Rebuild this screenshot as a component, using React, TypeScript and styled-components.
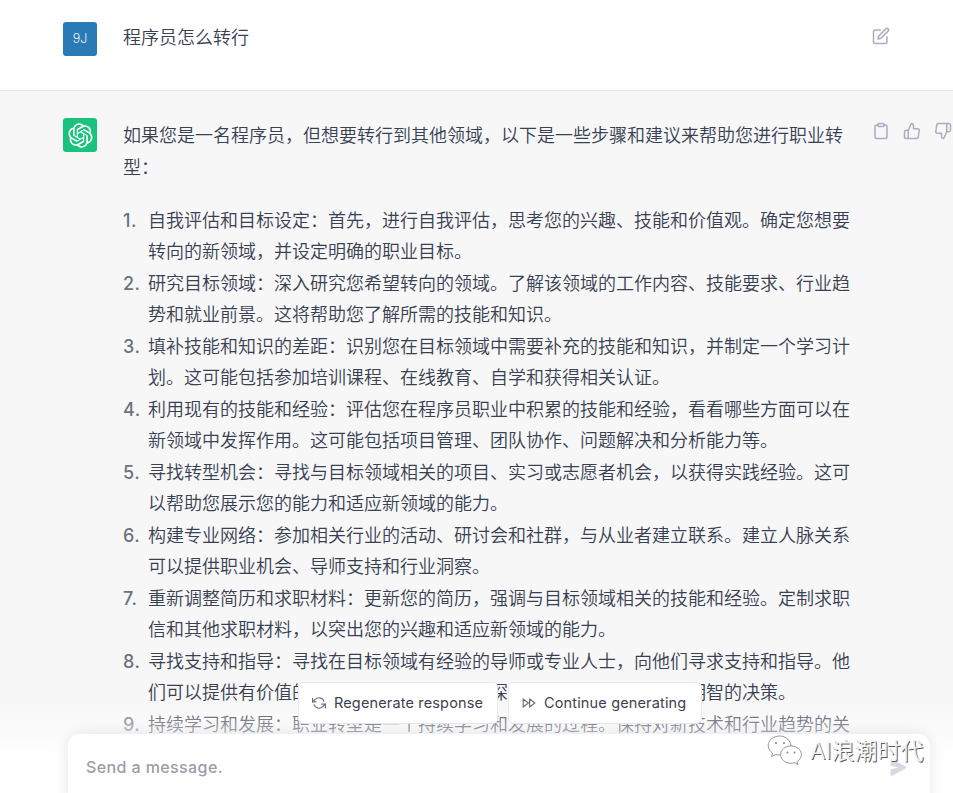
import React from 'react';
import styled, { createGlobalStyle } from 'styled-components';

const GlobalStyle = createGlobalStyle`
  html, body {
    margin: 0;
    height: 100%;
    overflow: hidden;
    background: #f7f7f8;
  }
  * { box-sizing: border-box; }
`;

const Page = styled.div`
  position: relative;
  width: 953px;
  height: 793px;
  overflow: hidden;
  font-family: Inter, "Noto Sans CJK SC", sans-serif;
  font-weight: 350;
  color: #374151;
  font-size: 18px;
  line-height: 31.5px;
`;

const Row = styled.div<{ $bot?: boolean }>`
  display: flex;
  padding: ${(p) => (p.$bot ? '27px 0 0 63px' : '22px 0 0 63px')};
  height: ${(p) => (p.$bot ? 'auto' : '91px')};
  background: ${(p) => (p.$bot ? '#f7f7f8' : '#ffffff')};
  border-bottom: ${(p) => (p.$bot ? 'none' : '1px solid #e5e5e6')};
`;

const Avatar = styled.div<{ $color: string }>`
  flex: none;
  width: 34px;
  height: 34px;
  border-radius: 3px;
  background: ${(p) => p.$color};
  color: #e8f2fa;
  display: flex;
  align-items: center;
  justify-content: center;
  font-size: 12.5px;
  line-height: 1;
`;

const Body = styled.div`
  flex: none;
  width: 728px;
  margin-left: 26px;
`;

const UserText = styled.div`
  margin-top: 0;
`;

const Para = styled.p`
  margin: 0;
  margin-top: 2px;
`;

const Steps = styled.ol`
  margin: 21.5px 0 0;
  padding: 0;
  list-style: none;
`;

const Step = styled.li`
  display: flex;
`;

const StepNum = styled.span`
  flex: none;
  width: 25px;
  font-weight: 500;
  letter-spacing: 0.5px;
  color: #6b7280;
`;

const StepText = styled.span`
  flex: 1;
`;

const Actions = styled.div<{ $top: number }>`
  flex: none;
  display: flex;
  gap: 13px;
  margin-left: 21px;
  color: #acacbe;
  padding-top: ${(p) => p.$top}px;
  height: 24px;
`;

const Fade = styled.div`
  position: absolute;
  left: 0;
  right: 0;
  bottom: 0;
  height: 112px;
  background: linear-gradient(180deg, rgba(255, 255, 255, 0) 18%, #ffffff 68%);
`;

const FloatButton = styled.button<{ $left: number; $width: number }>`
  position: absolute;
  top: 682px;
  left: ${(p) => p.$left}px;
  width: ${(p) => p.$width}px;
  height: 42px;
  padding: 0 0 0 13px;
  display: flex;
  align-items: center;
  gap: 8px;
  background: #ffffff;
  border: 1px solid #e8e8ea;
  border-radius: 5px;
  color: #40414f;
  font-family: Inter, sans-serif;
  font-size: 14.5px;
  letter-spacing: 0.15px;
  line-height: 20px;
`;

const InputBox = styled.div`
  position: absolute;
  left: 68px;
  top: 734px;
  width: 862px;
  height: 80px;
  padding: 21px 18px;
  background: #ffffff;
  border-radius: 12px;
  box-shadow: 0 0 15px rgba(0, 0, 0, 0.1);
  color: #9c9ca8;
  font-size: 16px;
  font-weight: 450;
  letter-spacing: 0.4px;
  line-height: 24px;
`;

const SendIcon = styled.svg`
  position: absolute;
  left: 822px;
  top: 25px;
  width: 17px;
  height: 17px;
  color: #d9d9e3;
`;

const Watermark = styled.div`
  position: absolute;
  left: 767px;
  top: 735px;
  display: flex;
  align-items: center;
  gap: 7px;
  height: 33px;
  color: #f2f2f2;
  font-size: 23px;
  line-height: 33px;
  text-shadow: 1px 1px 0 #5c5c5c;
`;

const stroke = {
  fill: 'none',
  stroke: 'currentColor',
  strokeWidth: 2,
  strokeLinecap: 'round' as const,
  strokeLinejoin: 'round' as const,
};

const OPENAI_PATH =
  'M37.5324 16.8707C37.9808 15.5241 38.1363 14.0974 37.9886 12.6859C37.8409 11.2744 37.3934 9.91076 36.676 8.68622C35.6126 6.83404 33.9882 5.3676 32.0373 4.4985C30.0864 3.62941 27.9098 3.40259 25.8215 3.85078C24.8796 2.7893 23.7219 1.94125 22.4257 1.36341C21.1295 0.785575 19.7249 0.491269 18.3058 0.500197C16.1708 0.495044 14.0893 1.16803 12.3614 2.42214C10.6335 3.67624 9.34853 5.44666 8.6917 7.47815C7.30085 7.76286 5.98686 8.3414 4.8377 9.17505C3.68854 10.0087 2.73073 11.0782 2.02839 12.312C0.956464 14.1591 0.498905 16.2988 0.721698 18.4228C0.944492 20.5467 1.83612 22.5449 3.268 24.1293C2.81966 25.4759 2.66413 26.9026 2.81182 28.3141C2.95951 29.7256 3.40701 31.0892 4.12437 32.3138C5.18791 34.1659 6.8123 35.6322 8.76321 36.5013C10.7141 37.3704 12.8907 37.5973 14.9789 37.1492C15.9208 38.2107 17.0786 39.0587 18.3747 39.6366C19.6709 40.2144 21.0755 40.5087 22.4946 40.4998C24.6307 40.5054 26.7133 39.8321 28.4418 38.5772C30.1704 37.3223 31.4556 35.5506 32.1119 33.5179C33.5027 33.2332 34.8167 32.6547 35.9659 31.821C37.115 30.9874 38.0728 29.9178 38.7752 28.684C39.8458 26.8371 40.3023 24.6979 40.0789 22.5748C39.8556 20.4517 38.9639 18.4544 37.5324 16.8707ZM22.4978 37.8849C20.7443 37.8874 19.0459 37.2733 17.6994 36.1501C17.7601 36.117 17.8666 36.0586 17.936 36.0161L25.9004 31.4156C26.1003 31.3019 26.2663 31.137 26.3813 30.9378C26.4964 30.7386 26.5563 30.5124 26.5549 30.2825V19.0542L29.9213 20.998C29.9389 21.0068 29.9541 21.0198 29.9656 21.0359C29.977 21.052 29.9842 21.0707 29.9867 21.0902V30.3889C29.9842 32.375 29.1946 34.2791 27.7909 35.6841C26.3872 37.0892 24.4838 37.8806 22.4978 37.8849ZM6.39227 31.0064C5.51397 29.4888 5.19742 27.7107 5.49804 25.9832C5.55718 26.0187 5.66048 26.0818 5.73461 26.1244L13.699 30.7248C13.8975 30.8408 14.1233 30.902 14.3532 30.902C14.583 30.902 14.8088 30.8408 15.0073 30.7248L24.731 25.1103V28.9979C24.7321 29.0177 24.7283 29.0376 24.7199 29.0556C24.7115 29.0736 24.6988 29.0893 24.6829 29.1012L16.6317 33.7497C14.9096 34.7416 12.8643 35.0097 10.9447 34.4954C9.02506 33.9811 7.38785 32.7263 6.39227 31.0064ZM4.29707 13.6194C5.17156 12.0998 6.55279 10.9364 8.19885 10.3327C8.19885 10.4013 8.19491 10.5228 8.19491 10.6071V19.808C8.19351 20.0378 8.25334 20.2638 8.36823 20.4629C8.48312 20.6619 8.64893 20.8267 8.84863 20.9404L18.5723 26.5542L15.206 28.4979C15.1894 28.5089 15.1703 28.5155 15.1505 28.5173C15.1307 28.5191 15.1107 28.516 15.0924 28.5082L7.04046 23.8557C5.32135 22.8601 4.06716 21.2235 3.55289 19.3046C3.03862 17.3858 3.30624 15.3413 4.29707 13.6194ZM31.955 20.0556L22.2312 14.4411L25.5976 12.4981C25.6142 12.4872 25.6333 12.4805 25.6531 12.4787C25.6729 12.4769 25.6928 12.4801 25.7111 12.4879L33.7631 17.1364C34.9967 17.849 36.0017 18.8982 36.6606 20.1613C37.3194 21.4244 37.6047 22.849 37.4832 24.2684C37.3617 25.6878 36.8382 27.0432 35.9743 28.1759C35.1103 29.3086 33.9415 30.1717 32.6047 30.6641C32.6047 30.5947 32.6047 30.4733 32.6047 30.3889V21.188C32.6066 20.9586 32.5474 20.7328 32.4332 20.5338C32.319 20.3348 32.154 20.1698 31.955 20.0556ZM35.3055 15.0128C35.2464 14.9765 35.1431 14.9142 35.069 14.8717L27.1045 10.2712C26.906 10.1554 26.6803 10.0943 26.4504 10.0943C26.2206 10.0943 25.9948 10.1554 25.7963 10.2712L16.0726 15.8858V11.9982C16.0715 11.9783 16.0753 11.9585 16.0837 11.9405C16.0921 11.9225 16.1048 11.9068 16.1207 11.8949L24.1719 7.25025C25.4053 6.53903 26.8158 6.19376 28.2383 6.25482C29.6608 6.31589 31.0364 6.78077 32.2044 7.59508C33.3723 8.40939 34.2842 9.53945 34.8334 10.8531C35.3826 12.1667 35.5464 13.6095 35.3055 15.0128ZM14.2424 21.9419L10.8752 19.9981C10.8576 19.9893 10.8423 19.9763 10.8309 19.9602C10.8195 19.9441 10.8122 19.9254 10.8098 19.9058V10.6071C10.8107 9.18295 11.2173 7.78848 11.9819 6.58696C12.7466 5.38544 13.8377 4.42659 15.1275 3.82264C16.4173 3.21869 17.8524 2.99464 19.2649 3.1767C20.6775 3.35876 22.0089 3.93941 23.1034 4.85067C23.0427 4.88379 22.937 4.94215 22.8668 4.98473L14.9024 9.58517C14.7025 9.69878 14.5366 9.86356 14.4215 10.0626C14.3065 10.2616 14.2466 10.4877 14.2479 10.7175L14.2424 21.9419ZM16.071 17.9991L20.4018 15.4978L24.7325 17.9975V22.9985L20.4018 25.4983L16.071 22.9985V17.9991Z';

const steps = [
  '自我评估和目标设定：首先，进行自我评估，思考您的兴趣、技能和价值观。确定您想要转向的新领域，并设定明确的职业目标。',
  '研究目标领域：深入研究您希望转向的领域。了解该领域的工作内容、技能要求、行业趋势和就业前景。这将帮助您了解所需的技能和知识。',
  '填补技能和知识的差距：识别您在目标领域中需要补充的技能和知识，并制定一个学习计划。这可能包括参加培训课程、在线教育、自学和获得相关认证。',
  '利用现有的技能和经验：评估您在程序员职业中积累的技能和经验，看看哪些方面可以在新领域中发挥作用。这可能包括项目管理、团队协作、问题解决和分析能力等。',
  '寻找转型机会：寻找与目标领域相关的项目、实习或志愿者机会，以获得实践经验。这可以帮助您展示您的能力和适应新领域的能力。',
  '构建专业网络：参加相关行业的活动、研讨会和社群，与从业者建立联系。建立人脉关系可以提供职业机会、导师支持和行业洞察。',
  '重新调整简历和求职材料：更新您的简历，强调与目标领域相关的技能和经验。定制求职信和其他求职材料，以突出您的兴趣和适应新领域的能力。',
  '寻找支持和指导：寻找在目标领域有经验的导师或专业人士，向他们寻求支持和指导。他们可以提供有价值的建议和指导，帮助您更深入地探索新领域并做出明智的决策。',
  '持续学习和发展：职业转型是一个持续学习和发展的过程。保持对新技术和行业趋势的关注，不断提升自己的技能。',
];

const App: React.FC = () => {
  return (
    <Page>
      <GlobalStyle />
      <Row>
        <Avatar $color="#2a7ab5">9J</Avatar>
        <Body>
          <UserText>程序员怎么转行</UserText>
        </Body>
        <Actions $top={5}>
          <svg width="18" height="18" viewBox="0 0 24 24" {...stroke}>
            <path d="M11 4H4a2 2 0 0 0-2 2v14a2 2 0 0 0 2 2h14a2 2 0 0 0 2-2v-7" />
            <path d="M18.5 2.5a2.121 2.121 0 0 1 3 3L12 15l-4 1 1-4 9.5-9.5z" />
          </svg>
        </Actions>
      </Row>
      <Row $bot>
        <Avatar $color="#19c37d">
          <svg width="25" height="25" viewBox="0 0 41 41" fill="#ffffff">
            <path d={OPENAI_PATH} />
          </svg>
        </Avatar>
        <Body>
          <Para>如果您是一名程序员，但想要转行到其他领域，以下是一些步骤和建议来帮助您进行职业转型：</Para>
          <Steps>
            {steps.map((text, i) => (
              <Step key={i}>
                <StepNum>{i + 1}.</StepNum>
                <StepText>{text}</StepText>
              </Step>
            ))}
          </Steps>
        </Body>
        <Actions $top={4}>
          <svg width="18" height="18" viewBox="0 0 24 24" {...stroke}>
            <path d="M16 4h2a2 2 0 0 1 2 2v14a2 2 0 0 1-2 2H6a2 2 0 0 1-2-2V6a2 2 0 0 1 2-2h2" />
            <rect x="8" y="2" width="8" height="4" rx="1" ry="1" />
          </svg>
          <svg width="18" height="18" viewBox="0 0 24 24" {...stroke}>
            <path d="M14 9V5a3 3 0 0 0-3-3l-4 9v11h11.28a2 2 0 0 0 2-1.7l1.38-9a2 2 0 0 0-2-2.3zM7 22H4a2 2 0 0 1-2-2v-7a2 2 0 0 1 2-2h3" />
          </svg>
          <svg width="18" height="18" viewBox="0 0 24 24" {...stroke}>
            <path d="M10 15v4a3 3 0 0 0 3 3l4-9V2H5.72a2 2 0 0 0-2 1.7l-1.38 9a2 2 0 0 0 2 2.3zm7-13h2.67A2.31 2.31 0 0 1 22 4v7a2.31 2.31 0 0 1-2.33 2H17" />
          </svg>
        </Actions>
      </Row>
      <Fade />
      <FloatButton $left={298} $width={200}>
        <svg width="14" height="14" viewBox="0 0 24 24" {...stroke} color="#6e6e80">
          <polyline points="1 4 1 10 7 10" />
          <polyline points="23 20 23 14 17 14" />
          <path d="M20.49 9A9 9 0 0 0 5.64 5.64L1 10m22 4l-4.64 4.36A9 9 0 0 1 3.51 15" />
        </svg>
        Regenerate response
      </FloatButton>
      <FloatButton $left={508} $width={194}>
        <svg width="14" height="14" viewBox="0 0 24 24" {...stroke} color="#6e6e80">
          <polygon points="13 19 22 12 13 5 13 19" />
          <polygon points="2 19 11 12 2 5 2 19" />
        </svg>
        Continue generating
      </FloatButton>
      <InputBox>
        Send a message.
        <SendIcon viewBox="0 0 16 16" fill="currentColor">
          <path d="M.5 1.163A1 1 0 0 1 1.97.28l12.868 6.837a1 1 0 0 1 0 1.766L1.969 15.72A1 1 0 0 1 .5 14.836V10.33a1 1 0 0 1 .816-.983L8.5 8 1.316 6.653A1 1 0 0 1 .5 5.67V1.163Z" />
        </SendIcon>
      </InputBox>
      <Watermark>
        <svg width="36" height="33" viewBox="0 0 36 33" fill="#ffffff" stroke="#8c8c8c" strokeWidth="0.9">
          <path d="M13 1C6.4 1 1.2 5.2 1.2 10.6c0 3 1.7 5.7 4.4 7.5l-1 3.4 3.9-2.1c1.4.4 2.9.6 4.5.6h.6l10.4-9.2C23.6 5.3 18.5 1 13 1z" />
          <path d="M24 10.9c-5.7 0-10.4 3.9-10.4 8.7s4.7 8.7 10.4 8.7c1.2 0 2.4-.2 3.5-.5l3.3 1.8-.9-2.9c2.7-1.6 4.5-4.2 4.5-7.1 0-4.8-4.7-8.7-10.4-8.7z" />
          <circle cx="9" cy="8" r="1.1" fill="#8c8c8c" stroke="none" />
          <circle cx="17" cy="8" r="1.1" fill="#8c8c8c" stroke="none" />
          <circle cx="20.5" cy="17.5" r="1" fill="#8c8c8c" stroke="none" />
          <circle cx="27.5" cy="17.5" r="1" fill="#8c8c8c" stroke="none" />
        </svg>
        AI浪潮时代
      </Watermark>
    </Page>
  );
};

export default App;
